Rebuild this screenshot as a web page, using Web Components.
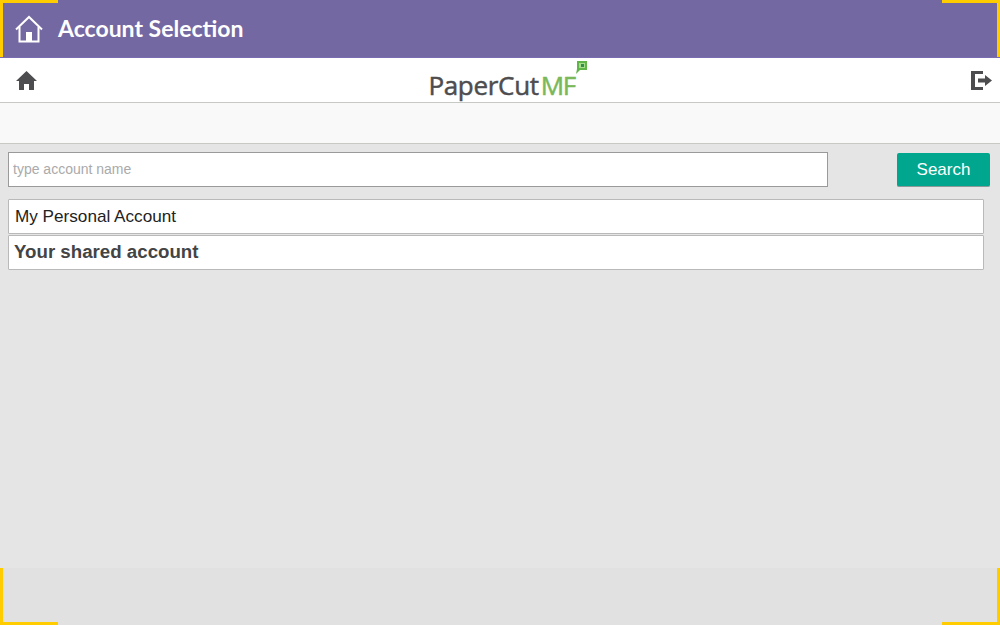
<!DOCTYPE html>
<html>
<head>
<meta charset="utf-8">
<title>Account Selection</title>
<style>
  html, body { margin: 0; height: 100%; }
  body { font-family: "Liberation Sans", Arial, sans-serif; background: #e5e5e5; }
</style>
</head>
<body>
<app-screen>
  <title-bar slot="title">Account Selection</title-bar>
  <nav-bar slot="nav"></nav-bar>
  <search-row slot="search"></search-row>
  <account-row>My Personal Account</account-row>
  <account-row shared>Your shared account</account-row>
</app-screen>

<script>
const screenTemplate = document.createElement("template");
screenTemplate.innerHTML = `
<style>
  :host { display: flex; flex-direction: column; width: 1000px; height: 625px; position: relative; overflow: hidden; }
  .band { height: 40px; background: #f9f9f9; border-bottom: 1px solid #c6c9c4; }
  main { flex: 1; background: #e5e5e5; padding: 8px 8px 0; display: flex; flex-direction: column; }
  .accounts { display: flex; flex-direction: column; gap: 1px; margin-top: 12px; }
  footer { height: 57px; background: #e1e1e1; }
  .corner { position: absolute; width: 55px; height: 54px; border: 0 solid #ffcc00; }
  .tl { top: 0; left: 0; border-top-width: 3px; border-left-width: 3px; }
  .tr { top: 0; right: 0; border-top-width: 3px; border-right-width: 3px; }
  .bl { bottom: 0; left: 0; border-bottom-width: 3px; border-left-width: 3px; }
  .br { bottom: 0; right: 0; border-bottom-width: 3px; border-right-width: 3px; }
</style>
<slot name="title"></slot>
<slot name="nav"></slot>
<div class="band"></div>
<main>
  <slot name="search"></slot>
  <div class="accounts"><slot></slot></div>
</main>
<footer></footer>
<div class="corner tl"></div>
<div class="corner tr"></div>
<div class="corner bl"></div>
<div class="corner br"></div>
`;

class AppScreen extends HTMLElement {
  constructor() {
    super();
    this.attachShadow({mode: "open"});
    this.shadowRoot.appendChild(screenTemplate.content.cloneNode(true));
  }
}

const titleTemplate = document.createElement("template");
titleTemplate.innerHTML = `
<style>
  :host { display: flex; align-items: center; height: 57px; padding-left: 15px; gap: 15px; background: #7468a2; border-bottom: 1px solid #7a6cb0; color: #fff; font: 700 23px/1 Lato, sans-serif; }
  svg { display: block; flex: none; width: 28px; height: 28px; }
</style>
<svg viewBox="0 0 28 28" fill="none" stroke="#fff" stroke-width="2">
  <path d="M1 14.500 14 2l13 12.500"/>
  <path d="M4.500 12v14.500h19V12"/>
  <rect x="11" y="17" width="6" height="9.500" fill="#fff" stroke="none"/>
</svg>
<span><slot></slot></span>
`;

class TitleBar extends HTMLElement {
  constructor() {
    super();
    this.attachShadow({mode: "open"});
    this.shadowRoot.appendChild(titleTemplate.content.cloneNode(true));
  }
}

const navTemplate = document.createElement("template");
navTemplate.innerHTML = `
<style>
  :host { display: flex; align-items: center; justify-content: space-between; height: 44px; padding: 0 8px 0 16px; background: #fff; border-bottom: 1px solid #c6c9c4; }
  svg { display: block; flex: none; }
  .logo { display: flex; align-items: flex-start; margin-left: 7px; height: 44px; font: 500 26px/1 "Open Sans", sans-serif; color: #4d4d4f; -webkit-text-stroke: 0.5px currentColor; }
  .logo span { margin-top: 14px; letter-spacing: -0.3px; }
  .logo b { font-weight: 500; color: #7ab85a; margin-left: 2px; letter-spacing: -1.5px; }
  .logo svg { margin-top: 3px; margin-left: 1px; }
</style>
<svg width="21" height="19" viewBox="0 0 21 19" fill="#4d4d4f">
  <path d="M10.500 0 21 10h-3v9h-5v-6H8v6H3v-9H0z"/>
</svg>
<div class="logo">
  <span>PaperCut<b>MF</b></span>
  <svg width="11" height="13" viewBox="0 0 11 13">
    <path d="M1 0h10v9H4l-4 4 1-5z" fill="#5fb548"/>
    <path d="M3 2h6v5H3z" fill="#a8dc8c"/>
    <path d="M5 3h3v3H5z" fill="#2f8f4a"/>
  </svg>
</div>
<svg width="21" height="19" viewBox="0 0 21 19" fill="#4d4d4f">
  <path d="M0 0h12v3H4v13h8v3H0z"/>
  <path d="M7 7.500h7V4l7 5.500-7 5.500v-3.500H7z"/>
</svg>
`;

class NavBar extends HTMLElement {
  constructor() {
    super();
    this.attachShadow({mode: "open"});
    this.shadowRoot.appendChild(navTemplate.content.cloneNode(true));
  }
}

const searchTemplate = document.createElement("template");
searchTemplate.innerHTML = `
<style>
  :host { display: flex; justify-content: space-between; align-items: flex-start; width: 982px; height: 35px; }
  input { box-sizing: border-box; width: 820px; height: 35px; padding: 0 4px 2px; margin: 0; border: 1px solid #9a9a9a; background: #fff; font: 14px "Liberation Sans", sans-serif; color: #333; outline: none; }
  input::placeholder { color: #aaa; opacity: 1; }
  button { box-sizing: border-box; width: 93px; height: 34px; margin-top: 1px; border: 0; border-bottom: 1px solid #8a9a96; border-radius: 2px; background: #00a78e; color: #fff; font: 17px "Liberation Sans", sans-serif; padding: 1px 0 0; }
</style>
<input type="text" placeholder="type account name">
<button>Search</button>
`;

class SearchRow extends HTMLElement {
  constructor() {
    super();
    this.attachShadow({mode: "open"});
    this.shadowRoot.appendChild(searchTemplate.content.cloneNode(true));
  }
}

const accountTemplate = document.createElement("template");
accountTemplate.innerHTML = `
<style>
  :host { display: flex; align-items: center; box-sizing: border-box; width: 976px; height: 35px; padding: 0 6px; background: #fff; border: 1px solid #b9b9b9; border-radius: 1px; font-size: 17.150px; color: #222; }
  :host([shared]) { padding: 0 6px 2px 5px; font-weight: 700; font-size: 18.700px; color: #444; }
</style>
<slot></slot>
`;

class AccountRow extends HTMLElement {
  constructor() {
    super();
    this.attachShadow({mode: "open"});
    this.shadowRoot.appendChild(accountTemplate.content.cloneNode(true));
  }
}

customElements.define("app-screen", AppScreen);
customElements.define("title-bar", TitleBar);
customElements.define("nav-bar", NavBar);
customElements.define("search-row", SearchRow);
customElements.define("account-row", AccountRow);
</script>
</body>
</html>
